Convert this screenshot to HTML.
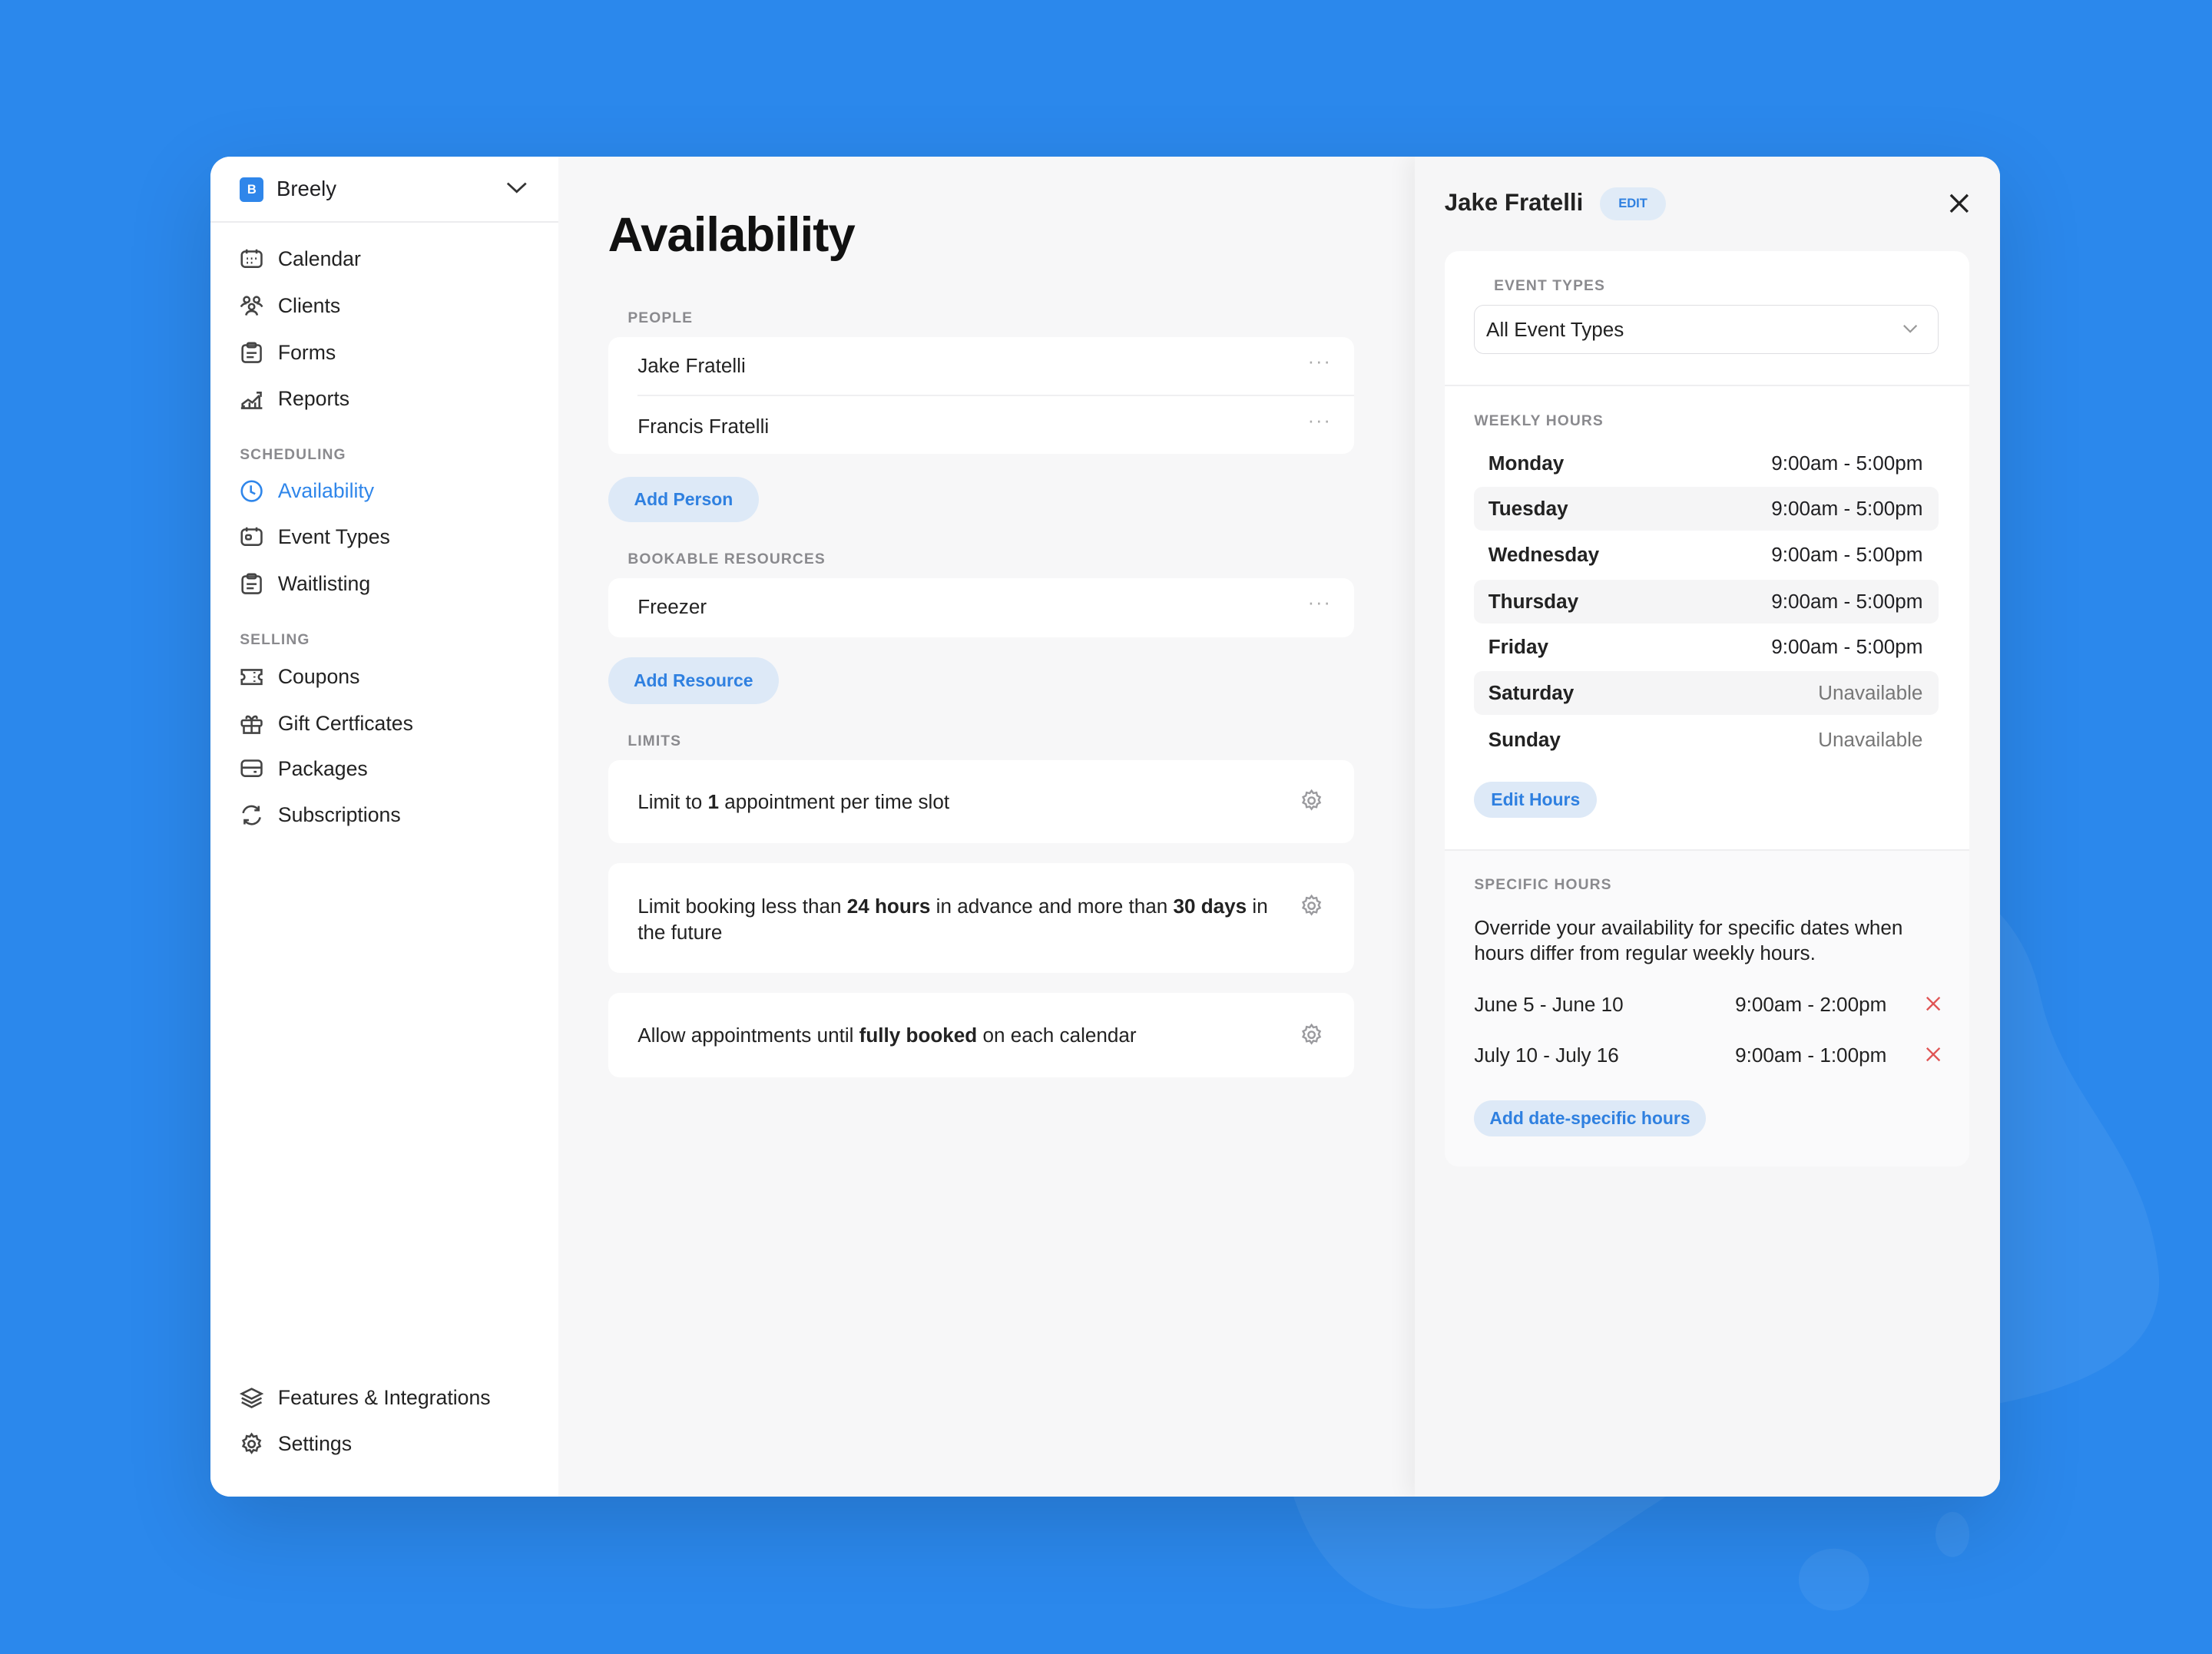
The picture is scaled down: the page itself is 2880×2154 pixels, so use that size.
<!DOCTYPE html>
<html><head><meta charset="utf-8"><style>
html,body{margin:0;padding:0;width:2880px;height:2154px;overflow:hidden;background:#2b88ec}
#z{zoom:1.836735;width:1568px;height:1173px;position:relative;font-family:"Liberation Sans",sans-serif;color:#1f1f22}
.a{position:absolute}
.card{left:149px;top:111px;width:1269px;height:950px;border-radius:14px;overflow:hidden;background:#f7f7f8;box-shadow:0 20px 60px rgba(0,0,0,.15)}
.side{left:0;top:0;width:247px;height:950px;background:#fff}
.nav{left:21px;font-size:14.5px;color:#222;display:flex;align-items:center;gap:10px;height:20px}
.nav svg{width:17px;height:17px;stroke:#444;fill:none;stroke-width:1.4}
.lab{font-size:10.5px;letter-spacing:.6px;color:#8a8a8e;font-weight:bold}
.box{background:#fff;border-radius:8px}
.row{font-size:14.2px;color:#222}
.dots{color:#aaa;font-size:14px;letter-spacing:1px}
.btn{background:#dde9f7;color:#2f80e0;font-size:12.5px;font-weight:bold;border-radius:17px;display:flex;align-items:center;justify-content:center}
.gear{width:17px;height:17px;stroke:#9a9a9e;fill:none;stroke-width:1.3}
.wk{left:21px;width:329px;height:31px;border-radius:6px;font-size:14.2px;display:flex;align-items:center;justify-content:space-between;padding:0 11px 0 10px;box-sizing:border-box}
.wk b{font-weight:bold;color:#222}
.wk.s{background:#f5f5f6}
</style></head><body><div id="z">
<svg class="a" style="left:0;top:0" width="1568" height="1173"><path d="M900 980 C880 850 1000 700 1150 640 C1300 580 1420 600 1445 700 C1460 780 1520 810 1530 900 C1540 990 1400 1000 1300 1010 C1180 1030 1100 1150 1000 1140 C930 1130 910 1060 900 980Z" fill="rgba(255,255,255,0.06)"/><ellipse cx="1300" cy="1120" rx="25" ry="22" fill="rgba(255,255,255,0.06)"/><ellipse cx="1384" cy="1088" rx="12" ry="16" fill="rgba(255,255,255,0.06)"/></svg>
<div class="a card">
 <div class="a side">
  <div class="a" style="left:21px;top:15px;width:17px;height:17px;background:#2f86ea;border-radius:3px;color:#fff;font-size:9px;font-weight:bold;text-align:center;line-height:17px">B</div>
  <div class="a" style="left:47px;top:14px;font-size:15px">Breely</div>
  <svg class="a" style="left:210px;top:17px" width="15" height="10"><path d="M1 2l6.5 6 6.5-6" stroke="#333" fill="none" stroke-width="1.5"/></svg>
  <div class="a" style="left:0;top:46px;width:247px;height:1px;background:#ececee"></div>
  <div class="a nav" style="top:63px"><svg viewBox="0 0 17 17"><rect x="1.5" y="3" width="14" height="11" rx="2.5"/><path d="M5 1.5v3M12 1.5v3M5 8h1M8 8h1M11 8h1M5 11h1M8 11h1"/></svg>Calendar</div>
  <div class="a nav" style="top:96px"><svg viewBox="0 0 17 17"><circle cx="5" cy="4" r="2"/><circle cx="12" cy="4" r="2"/><circle cx="8.5" cy="9" r="2"/><path d="M1 9c1-2 3-2.5 4-2.5M16 9c-1-2-3-2.5-4-2.5M4.5 15c.5-2 2-3 4-3s3.5 1 4 3"/></svg>Clients</div>
  <div class="a nav" style="top:129px"><svg viewBox="0 0 17 17"><rect x="2" y="3" width="13" height="12" rx="2"/><rect x="5.5" y="1.5" width="6" height="3" rx="1"/><path d="M5 8.5h7M5 11.5h5"/></svg>Forms</div>
  <div class="a nav" style="top:162px"><svg viewBox="0 0 17 17"><path d="M1 15h15M2 15v-3l4-3 3 2 5-5M3 15v-2M7 15v-4M11 15v-4M14 15V7M12 4h3v3"/></svg>Reports</div>
  <div class="a lab" style="left:21px;top:206px">SCHEDULING</div>
  <div class="a nav" style="top:227px;color:#2f86ea"><svg viewBox="0 0 17 17" style="stroke:#2f86ea"><circle cx="8.5" cy="8.5" r="7"/><path d="M8 4.5v4.5l3 1.5"/></svg>Availability</div>
  <div class="a nav" style="top:260px"><svg viewBox="0 0 17 17"><rect x="1.5" y="3" width="14" height="11" rx="2.5"/><path d="M5 1.5v3M12 1.5v3"/><rect x="4.5" y="7" width="3.5" height="3" rx="1"/></svg>Event Types</div>
  <div class="a nav" style="top:293px"><svg viewBox="0 0 17 17"><rect x="2" y="3" width="13" height="12" rx="2"/><rect x="5.5" y="1.5" width="6" height="3" rx="1"/><path d="M5 8.5h7M5 11.5h5"/></svg>Waitlisting</div>
  <div class="a lab" style="left:21px;top:337px">SELLING</div>
  <div class="a nav" style="top:359px"><svg viewBox="0 0 17 17"><path d="M1.5 3.5h14v3a2 2 0 000 4v3h-14v-3a2 2 0 000-4z M10.5 5v1M10.5 8v1M10.5 11v1"/></svg>Coupons</div>
  <div class="a nav" style="top:392px"><svg viewBox="0 0 17 17"><rect x="1.5" y="6" width="14" height="4" rx="1"/><path d="M3 10v5h11v-5M8.5 6v9M8.5 6C7 2 4 3 5 5M8.5 6C10 2 13 3 12 5"/></svg>Gift Certficates</div>
  <div class="a nav" style="top:424px"><svg viewBox="0 0 17 17"><rect x="1.5" y="3" width="14" height="11" rx="2.5"/><path d="M1.5 8h14M10 11h2"/></svg>Packages</div>
  <div class="a nav" style="top:457px"><svg viewBox="0 0 17 17"><path d="M2.5 7a6 6 0 0111-2M14.5 10a6 6 0 01-11 2M13.5 2v3h-3M3.5 15v-3h3"/></svg>Subscriptions</div>
  <div class="a nav" style="top:870px"><svg viewBox="0 0 17 17"><path d="M8.5 2l7 3.5-7 3.5-7-3.5z M1.5 8.5l7 3.5 7-3.5M1.5 11.5l7 3.5 7-3.5"/></svg>Features &amp; Integrations</div>
  <div class="a nav" style="top:903px"><svg viewBox="0 0 17 17"><circle cx="8.5" cy="8.5" r="2.3"/><path d="M8.5 1.5l1.3 1.8 2.2-.5.5 2.2 2 1-1 2 1 2-2 1-.5 2.2-2.2-.5-1.3 1.8-1.3-1.8-2.2.5-.5-2.2-2-1 1-2-1-2 2-1 .5-2.2 2.2.5z"/></svg>Settings</div>
 </div>
 <div class="a" style="left:282px;top:36px;font-size:34.5px;font-weight:bold;color:#111;letter-spacing:-.5px">Availability</div>
 <div class="a lab" style="left:296px;top:109px">PEOPLE</div>
 <div class="a box" style="left:282px;top:128px;width:529px;height:83px">
  <div class="a row" style="left:21px;top:12px">Jake Fratelli</div><div class="a dots" style="left:496px;top:10px">···</div>
  <div class="a" style="left:21px;top:41px;width:508px;height:1px;background:#efeff1"></div>
  <div class="a row" style="left:21px;top:55px">Francis Fratelli</div><div class="a dots" style="left:496px;top:52px">···</div>
 </div>
 <div class="a btn" style="left:282px;top:227px;width:107px;height:32px">Add Person</div>
 <div class="a lab" style="left:296px;top:280px">BOOKABLE RESOURCES</div>
 <div class="a box" style="left:282px;top:299px;width:529px;height:42px"><div class="a row" style="left:21px;top:12px">Freezer</div><div class="a dots" style="left:496px;top:10px">···</div></div>
 <div class="a btn" style="left:282px;top:355px;width:121px;height:33px">Add Resource</div>
 <div class="a lab" style="left:296px;top:409px">LIMITS</div>
 <div class="a box" style="left:282px;top:428px;width:529px;height:59px"><div class="a row" style="left:21px;top:21px">Limit to <b>1</b> appointment per time slot</div><svg class="a gear" style="left:490px;top:20px" viewBox="0 0 17 17"><circle cx="8.5" cy="8.5" r="2.3"/><path d="M8.5 1.5l1.3 1.8 2.2-.5.5 2.2 2 1-1 2 1 2-2 1-.5 2.2-2.2-.5-1.3 1.8-1.3-1.8-2.2.5-.5-2.2-2-1 1-2-1-2 2-1 .5-2.2 2.2.5z"/></svg></div>
 <div class="a box" style="left:282px;top:501px;width:529px;height:78px"><div class="a row" style="left:21px;top:22px;width:450px;line-height:18px">Limit booking less than <b>24 hours</b> in advance and more than <b>30 days</b> in the future</div><svg class="a gear" style="left:490px;top:22px" viewBox="0 0 17 17"><circle cx="8.5" cy="8.5" r="2.3"/><path d="M8.5 1.5l1.3 1.8 2.2-.5.5 2.2 2 1-1 2 1 2-2 1-.5 2.2-2.2-.5-1.3 1.8-1.3-1.8-2.2.5-.5-2.2-2-1 1-2-1-2 2-1 .5-2.2 2.2.5z"/></svg></div>
 <div class="a box" style="left:282px;top:593px;width:529px;height:60px"><div class="a row" style="left:21px;top:22px">Allow appointments until <b>fully booked</b> on each calendar</div><svg class="a gear" style="left:490px;top:21px" viewBox="0 0 17 17"><circle cx="8.5" cy="8.5" r="2.3"/><path d="M8.5 1.5l1.3 1.8 2.2-.5.5 2.2 2 1-1 2 1 2-2 1-.5 2.2-2.2-.5-1.3 1.8-1.3-1.8-2.2.5-.5-2.2-2-1 1-2-1-2 2-1 .5-2.2 2.2.5z"/></svg></div>
 <div class="a" style="left:854px;top:0;width:415px;height:950px;background:#f6f6f7;box-shadow:-6px 0 14px rgba(0,0,0,.05)">
  <div class="a" style="left:21px;top:23px;font-size:17px;font-weight:bold;color:#222">Jake Fratelli</div>
  <div class="a" style="left:131px;top:22px;width:47px;height:23px;border-radius:12px;background:#e0ebf7;color:#2f80e0;font-size:9px;font-weight:bold;text-align:center;line-height:23px">EDIT</div>
  <svg class="a" style="left:379px;top:26px" width="14" height="14"><path d="M1 1l12 12M13 1L1 13" stroke="#222" stroke-width="1.8"/></svg>
  <div class="a" style="left:21px;top:67px;width:372px;height:649px;background:#fff;border-radius:10px">
   <div class="a lab" style="left:35px;top:19px">EVENT TYPES</div>
   <div class="a" style="left:21px;top:38px;width:329px;height:35px;border:1px solid #dedee2;border-radius:7px;box-sizing:border-box"><div class="a row" style="left:8px;top:9px">All Event Types</div><svg class="a" style="left:303px;top:13px" width="11" height="7"><path d="M1 1l4.5 4.5L10 1" stroke="#999" fill="none" stroke-width="1.2"/></svg></div>
   <div class="a" style="left:0;top:95px;width:372px;height:1px;background:#eeeef0"></div>
   <div class="a lab" style="left:21px;top:115px">WEEKLY HOURS</div>
   <div class="a wk" style="top:135px"><b>Monday</b><span>9:00am - 5:00pm</span></div>
   <div class="a wk s" style="top:167px"><b>Tuesday</b><span>9:00am - 5:00pm</span></div>
   <div class="a wk" style="top:200px"><b>Wednesday</b><span>9:00am - 5:00pm</span></div>
   <div class="a wk s" style="top:233px"><b>Thursday</b><span>9:00am - 5:00pm</span></div>
   <div class="a wk" style="top:265px"><b>Friday</b><span>9:00am - 5:00pm</span></div>
   <div class="a wk s" style="top:298px"><b>Saturday</b><span style="color:#777">Unavailable</span></div>
   <div class="a wk" style="top:331px"><b>Sunday</b><span style="color:#777">Unavailable</span></div>
   <div class="a btn" style="left:21px;top:376px;width:87px;height:26px">Edit Hours</div>
   <div class="a" style="left:0;top:424px;width:372px;height:1px;background:#eeeef0"></div>
   <div class="a" style="left:0;top:425px;width:372px;height:224px;background:#fafafb;border-radius:0 0 10px 10px"></div>
   <div class="a lab" style="left:21px;top:444px">SPECIFIC HOURS</div>
   <div class="a row" style="left:21px;top:471px;width:330px;line-height:18px">Override your availability for specific dates when hours differ from regular weekly hours.</div>
   <div class="a row" style="left:21px;top:526px">June 5 - June 10</div><div class="a row" style="left:206px;top:526px">9:00am - 2:00pm</div>
   <svg class="a" style="left:341px;top:528px" width="11" height="11"><path d="M1 1l9 9M10 1L1 10" stroke="#e05555" stroke-width="1.3"/></svg>
   <div class="a row" style="left:21px;top:562px">July 10 - July 16</div><div class="a row" style="left:206px;top:562px">9:00am - 1:00pm</div>
   <svg class="a" style="left:341px;top:564px" width="11" height="11"><path d="M1 1l9 9M10 1L1 10" stroke="#e05555" stroke-width="1.3"/></svg>
   <div class="a btn" style="left:21px;top:602px;width:164px;height:26px">Add date-specific hours</div>
  </div>
 </div>
</div>
</div></body></html>
